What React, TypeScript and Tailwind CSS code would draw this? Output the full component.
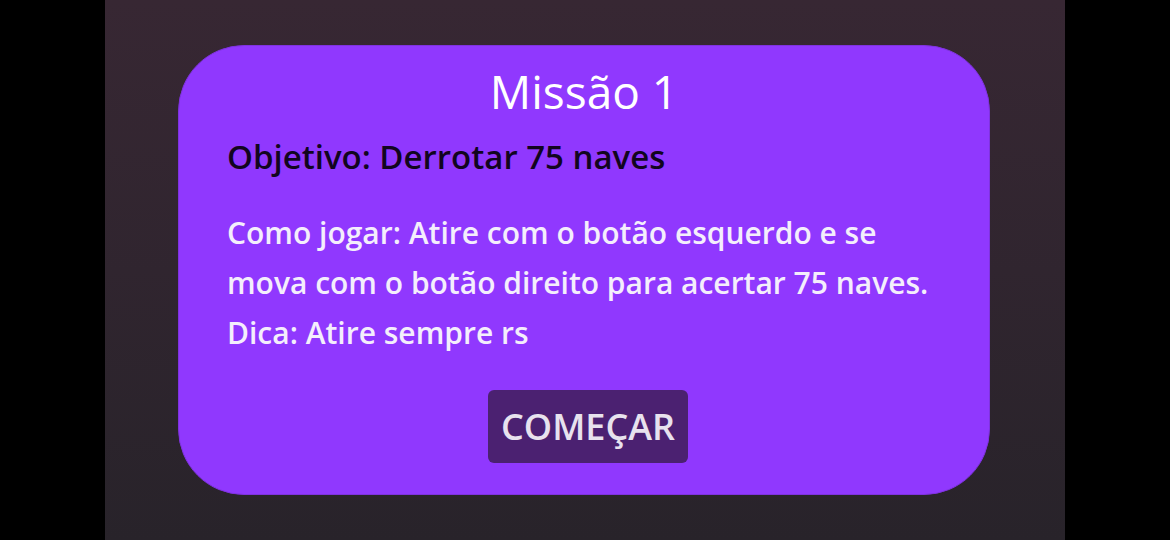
export default function App() {
  return (
    <div className="w-[1170px] h-[540px] bg-black flex justify-center overflow-hidden" style={{ fontFamily: '"Open Sans", "Noto Sans", sans-serif' }}>
      <div className="w-[960px] h-[540px] bg-gradient-to-b from-[#372733] via-[#30252f] to-[#28232a] pt-[45px] pl-[73px]">
        <div className="w-[812px] h-[450px] rounded-[66px] bg-[#9038fe] border border-[#7f32e0] pt-[19px] pl-[48px] pr-[40px] flex flex-col">
          <h1 className="text-center text-white text-[46px] leading-[52px] font-normal pr-[8px]">Missão 1</h1>
          <p className="mt-[22px] text-[#12051f] text-[33px] leading-[36px] font-semibold">Objetivo: Derrotar 75 naves</p>
          <p className="mt-[33px] text-[#f4eefc] text-[30px] leading-[50px] font-semibold whitespace-nowrap">
            Como jogar: Atire com o botão esquerdo e se<br />
            mova com o botão direito para acertar 75 naves.<br />
            Dica: Atire sempre rs
          </p>
          <div className="mt-[32px] flex justify-center">
            <button className="w-[200px] h-[73px] rounded-[6px] bg-[#4b2171] text-[#e8e2ee] text-[36px] font-semibold leading-none">COMEÇAR</button>
          </div>
        </div>
      </div>
    </div>
  );
}
